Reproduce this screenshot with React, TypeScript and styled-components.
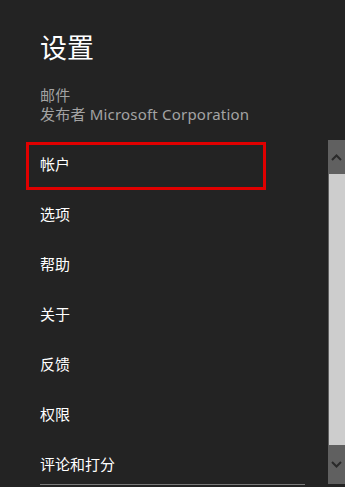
import React from "react";
import styled, { createGlobalStyle } from "styled-components";

const Global = createGlobalStyle`
  html, body { margin: 0; padding: 0; background: #232323; }
  body { font-family: "Noto Sans", "Noto Sans CJK SC", sans-serif; }
  * { box-sizing: border-box; }
`;

const Page = styled.div`
  width: 345px;
  height: 487px;
  overflow: hidden;
  background: #232323;
  display: flex;
  flex-direction: column;
`;

const Header = styled.header`
  padding: 31px 0 0 40px;
`;

const Title = styled.h1`
  margin: 0;
  font-size: 27px;
  line-height: 32px;
  font-weight: 400;
  color: #ffffff;
  font-family: "Noto Sans CJK SC", sans-serif;
`;

const Meta = styled.div`
  margin-top: 23px;
  font-size: 15px;
  line-height: 19px;
  color: #a3a3a3;
  letter-spacing: 0.2px;
  font-family: "Noto Sans", "Noto Sans CJK SC", sans-serif;
`;

const ScrollArea = styled.div`
  margin-top: 16px;
  height: 344px;
  display: flex;
`;

const List = styled.ul`
  flex: 1;
  margin: 0;
  padding: 0 0 0 26px;
  list-style: none;
  overflow: hidden;
`;

const Row = styled.li`
  height: 50px;
  flex-shrink: 0;
  padding-top: 2px;
`;

const ItemBox = styled.div<{ $selected?: boolean }>`
  width: 240px;
  height: 48px;
  border: 3px solid ${(p) => (p.$selected ? "#e00000" : "transparent")};
  padding: 9px 0 0 11px;
  font-size: 15px;
  line-height: 20px;
  color: #ffffff;
  font-family: "Noto Sans CJK SC", sans-serif;
`;

const Scrollbar = styled.div`
  width: 17px;
  background: #606060;
  display: flex;
  flex-direction: column;
`;

const ArrowButton = styled.div<{ $h: number }>`
  height: ${(p) => p.$h}px;
  display: flex;
  align-items: center;
  justify-content: center;
  flex-shrink: 0;
`;

const Thumb = styled.div`
  height: 271px;
  margin-left: 1px;
  background: #cdcdcd;
`;

const Divider = styled.div`
  margin-left: 40px;
  width: 265px;
  height: 1px;
  background: #7a7a7a;
`;

const Chevron = ({ up }: { up?: boolean }) => (
  <svg width="11" height="7" viewBox="0 0 11 7">
    <path
      d={up ? "M1 6 L5.5 1.5 L10 6" : "M1 1 L5.5 5.5 L10 1"}
      fill="none"
      stroke="#2a2a2a"
      strokeWidth="2"
    />
  </svg>
);

const items = ["帐户", "选项", "帮助", "关于", "反馈", "权限", "评论和打分"];

export default function App() {
  return (
    <>
      <Global />
      <Page>
        <Header>
          <Title>设置</Title>
          <Meta>
            <div>邮件</div>
            <div>发布者 Microsoft Corporation</div>
          </Meta>
        </Header>
        <ScrollArea>
          <List>
            {items.map((t, i) => (
              <Row key={t}>
                <ItemBox $selected={i === 0}>{t}</ItemBox>
              </Row>
            ))}
          </List>
          <Scrollbar>
            <ArrowButton $h={34}>
              <Chevron up />
            </ArrowButton>
            <Thumb />
            <ArrowButton $h={39}>
              <Chevron />
            </ArrowButton>
          </Scrollbar>
        </ScrollArea>
        <Divider />
      </Page>
    </>
  );
}
